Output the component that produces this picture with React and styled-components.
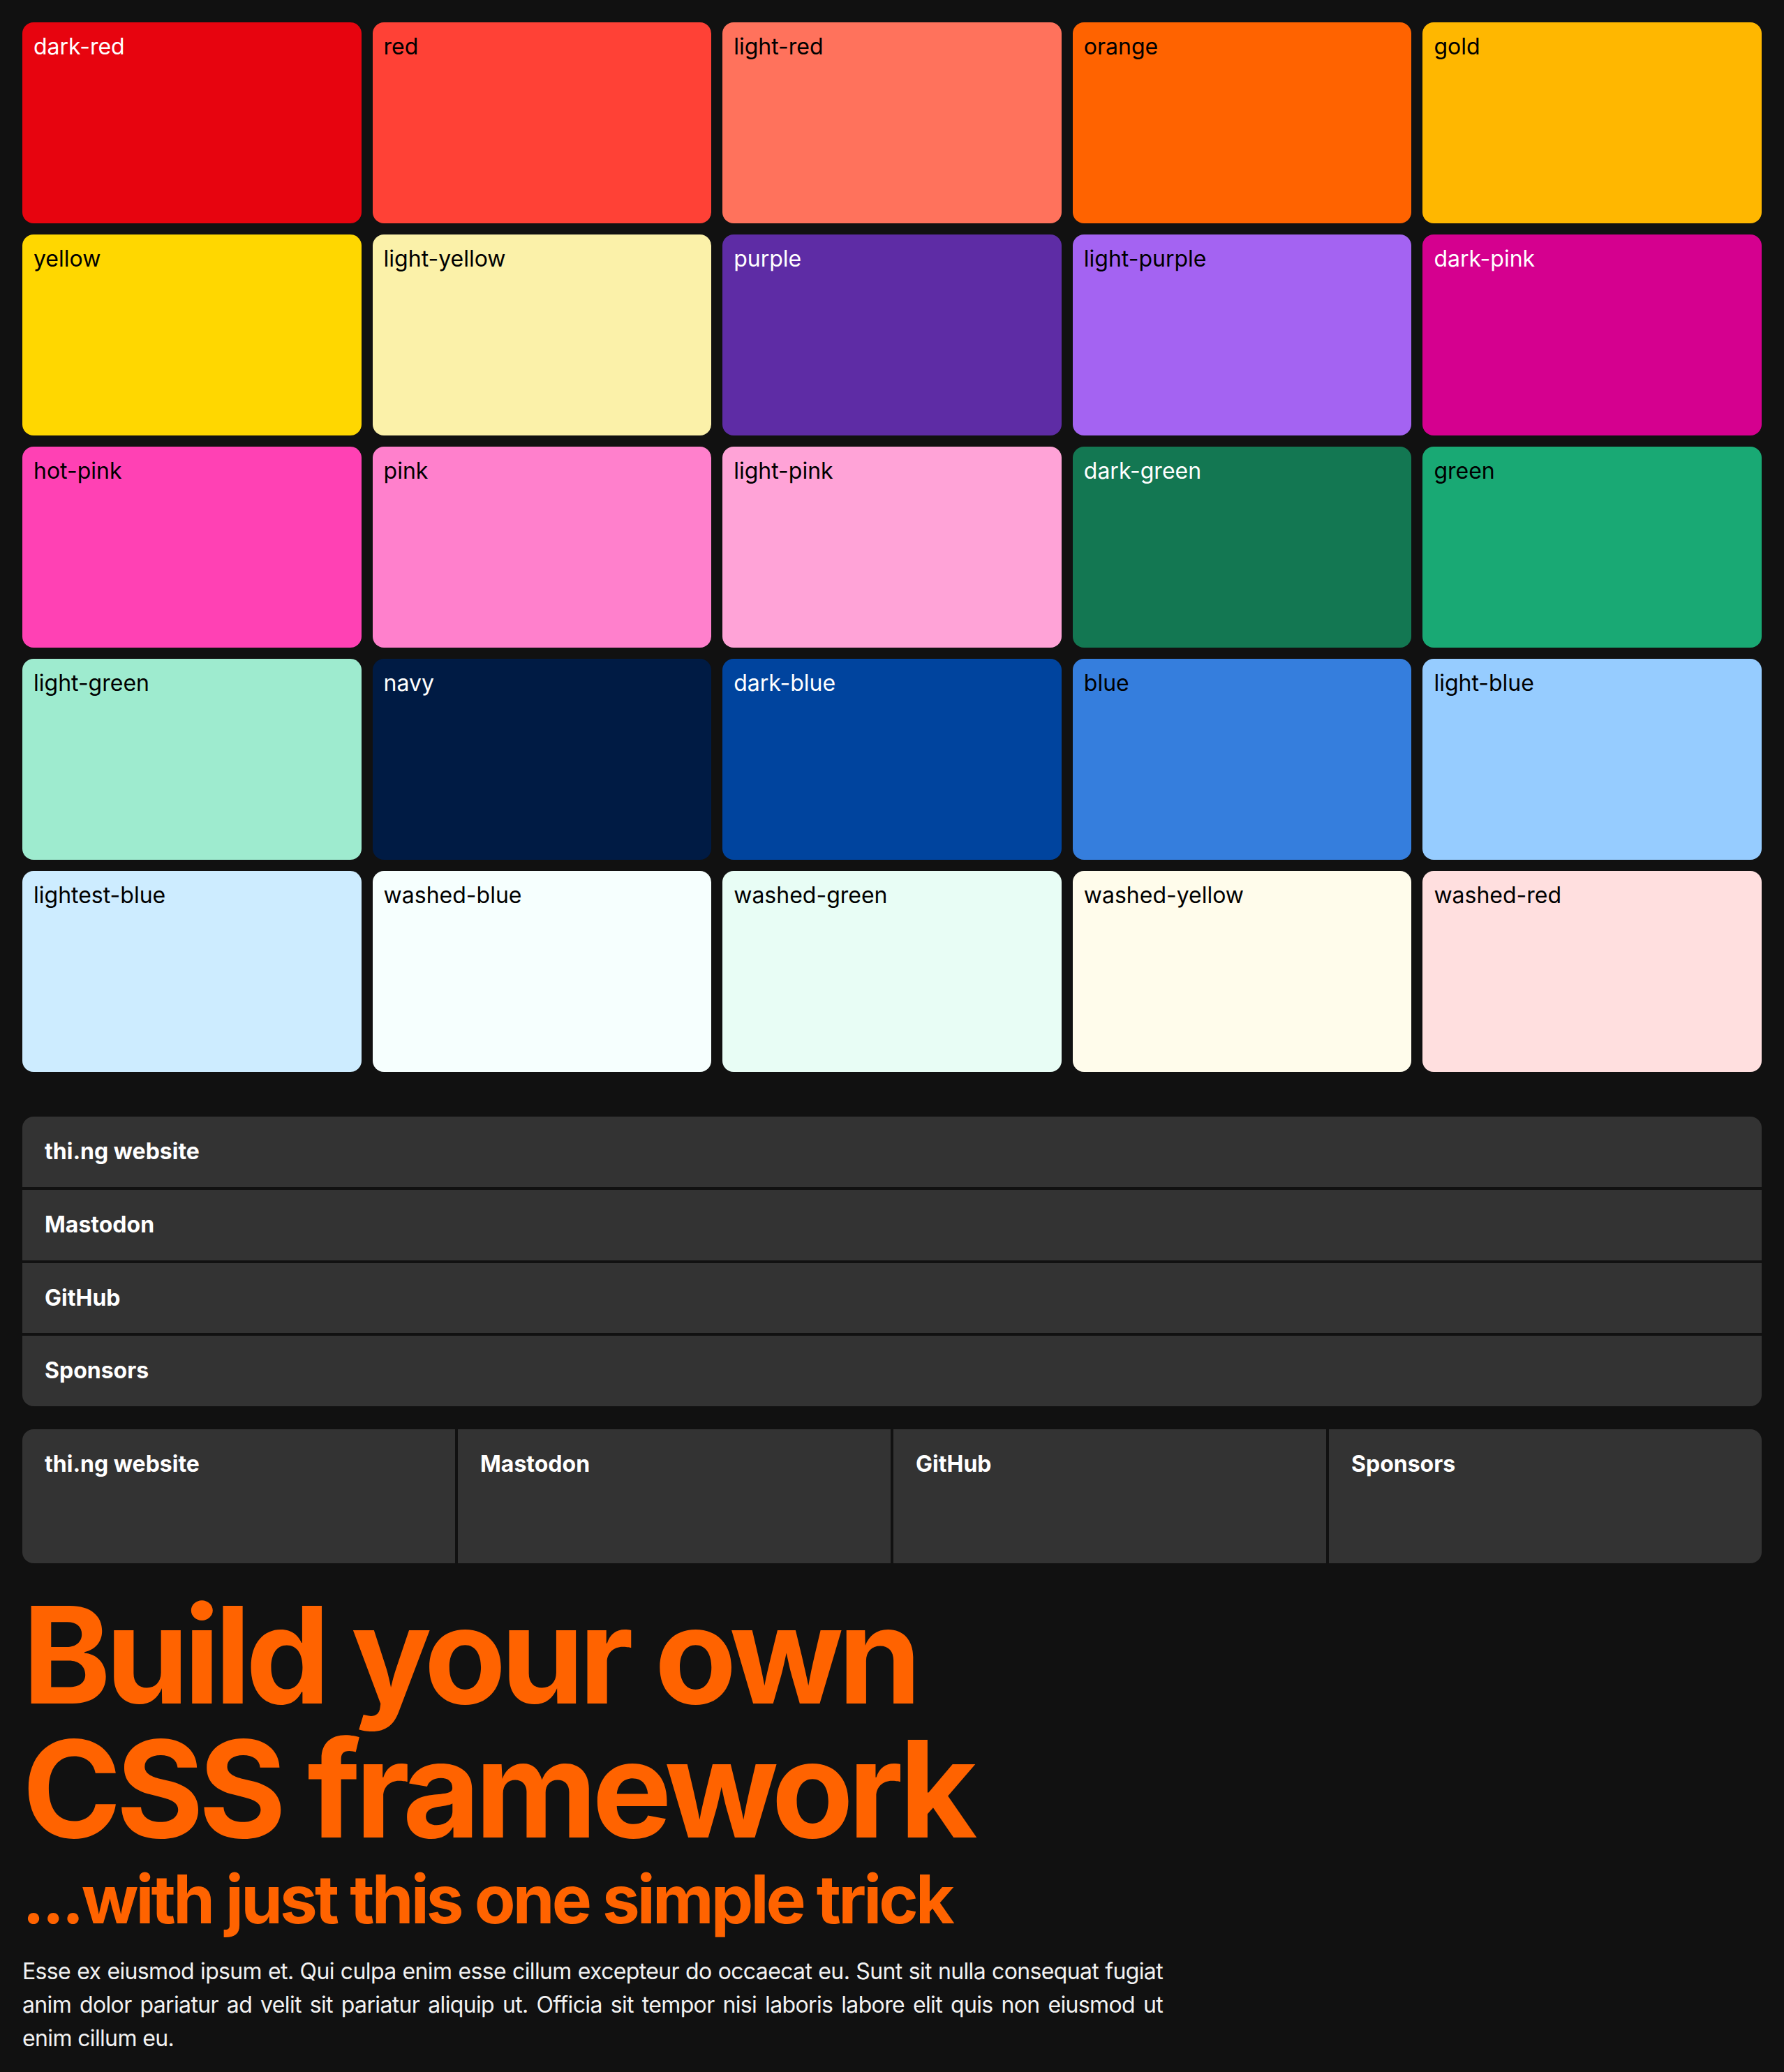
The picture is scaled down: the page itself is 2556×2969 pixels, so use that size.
import React from 'react';
import styled, { createGlobalStyle } from 'styled-components';

const GlobalStyle = createGlobalStyle`
    html, body {
        margin: 0;
        padding: 0;
        background: #111;
    }

    body {
        font-family: Inter, "Noto Sans", "Liberation Sans", sans-serif;
        color: #eee;
        font-size: 32px;
    }

    * {
        box-sizing: border-box;
    }
`;

const Page = styled.main`
    padding: 32px;
`;

const SwatchGrid = styled.section`
    display: grid;
    grid-template-columns: repeat(5, 1fr);
    gap: 16px;
`;

const Swatch = styled.div`
    height: 288px;
    padding: 16px;
    border-radius: 16px;
    background: ${(p) => p.bg};
    color: ${(p) => (p.light ? '#fff' : '#000')};
    font-size: 32px;
    line-height: 1.2;
`;

const LinkList = styled.nav`
    margin-top: 64px;
    display: flex;
    flex-direction: column;
    gap: 4px;
    border-radius: 16px;
    overflow: hidden;
`;

const LinkGrid = styled.nav`
    margin-top: 33px;
    display: grid;
    grid-template-columns: repeat(4, 1fr);
    gap: 4px;
    border-radius: 16px;
    overflow: hidden;
`;

const LinkItem = styled.a`
    display: block;
    background: #333;
    color: #fff;
    text-decoration: none;
    font-weight: 700;
    font-size: 32px;
    line-height: 1.15;
    padding: 32px;
    height: ${(p) => (p.tall ? '192px' : 'auto')};
`;

const Title = styled.h1`
    margin: 35px 0 0;
    color: #ff6300;
    font-size: 192px;
    font-weight: 700;
    line-height: 1;
    letter-spacing: -0.04em;
`;

const Subtitle = styled.h2`
    margin: 14px 0 0;
    color: #ff6300;
    font-size: 96px;
    font-weight: 700;
    line-height: 1;
    letter-spacing: -0.04em;
`;

const Body = styled.p`
    margin: 32px 0 0;
    max-width: 1634px;
    font-size: 32px;
    line-height: 1.5;
    letter-spacing: -0.02em;
    text-align: justify;
    color: #f2f2f2;
`;

const swatches = [
    ['dark-red', '#e7040f', true],
    ['red', '#ff4136'],
    ['light-red', '#ff725c'],
    ['orange', '#ff6300'],
    ['gold', '#ffb700'],
    ['yellow', '#ffd700'],
    ['light-yellow', '#fbf1a9'],
    ['purple', '#5e2ca5', true],
    ['light-purple', '#a463f2'],
    ['dark-pink', '#d5008f', true],
    ['hot-pink', '#ff41b4'],
    ['pink', '#ff80cc'],
    ['light-pink', '#ffa3d7'],
    ['dark-green', '#137752', true],
    ['green', '#19a974'],
    ['light-green', '#9eebcf'],
    ['navy', '#001b44', true],
    ['dark-blue', '#00449e', true],
    ['blue', '#357edd'],
    ['light-blue', '#96ccff'],
    ['lightest-blue', '#cdecff'],
    ['washed-blue', '#f6fffe'],
    ['washed-green', '#e8fdf5'],
    ['washed-yellow', '#fffceb'],
    ['washed-red', '#ffdfdf'],
];

const links = ['thi.ng website', 'Mastodon', 'GitHub', 'Sponsors'];

function App() {
    return (
        <Page>
            <GlobalStyle />
            <SwatchGrid>
                {swatches.map(([name, bg, light]) => (
                    <Swatch key={name} bg={bg} light={light}>
                        {name}
                    </Swatch>
                ))}
            </SwatchGrid>

            <LinkList>
                {links.map((label) => (
                    <LinkItem key={label} href="#">{label}</LinkItem>
                ))}
            </LinkList>

            <LinkGrid>
                {links.map((label) => (
                    <LinkItem key={label} href="#" tall>{label}</LinkItem>
                ))}
            </LinkGrid>

            <Title>
                Build your own
                <br />
                CSS framework
            </Title>
            <Subtitle>...with just this one simple trick</Subtitle>
            <Body>
                Esse ex eiusmod ipsum et. Qui culpa enim esse cillum excepteur do occaecat eu.
                Sunt sit nulla consequat fugiat anim dolor pariatur ad velit sit pariatur aliquip
                ut. Officia sit tempor nisi laboris labore elit quis non eiusmod ut enim cillum eu.
            </Body>
        </Page>
    );
}

export default App;
